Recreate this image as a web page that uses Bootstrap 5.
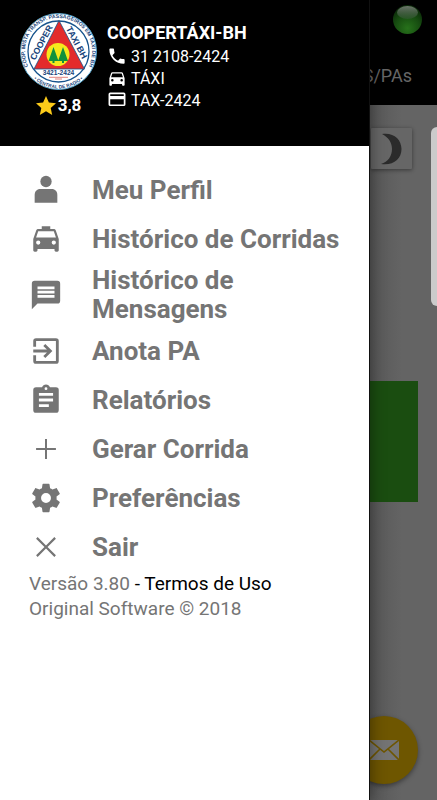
<!DOCTYPE html>
<html lang="pt-BR">
<head>
<meta charset="utf-8">
<meta name="viewport" content="width=device-width, initial-scale=1">
<title>Coopertáxi-BH</title>
<link href="https://cdn.jsdelivr.net/npm/bootstrap@5.3.0/dist/css/bootstrap.min.css" rel="stylesheet">
<style>
body { font-family: Roboto, sans-serif; color: #757575; background: #646464; }
svg { display: block; flex: none; }
.app-head { background: #000; height: 105px; padding: 4px 14px 0 0; }
.app-tab { font-size: 18px; line-height: 24px; color: #666; padding: 0 11px 17px 0; }
.map-area { background: linear-gradient(90deg, #646464 84%, #565656 84%, #646464 92%); }
.night-btn { width: 41px; height: 41px; margin: 23px 25px 0 0; border: 0; border-radius: 1px; background: #666; box-shadow: 0 1px 4px rgba(0,0,0,.45); }
.side-tab { top: 127px; width: 6px; height: 179px; background: #cbcbcb; border-radius: 6px 0 0 6px; }
.ride-box { width: 100px; height: 121px; margin: 212px 19px 0 0; background: #1a4d10; }
.mail-btn { width: 68px; height: 68px; margin: 0 19px 16px 0; border: 0; border-radius: 50%; background: #6e5600; box-shadow: 0 2px 5px rgba(0,0,0,.4); }
.drawer { width: calc(100% - 68px); background: #fff; box-shadow: 1px 0 0 #111, 2px 0 14px rgba(0,0,0,.4); }
.drawer-head { background: #000; color: #fff; height: 146px; padding: 13px 20px 0; gap: 10px; }
.rating { font-size: 17px; line-height: 24px; gap: 2px; margin-top: 3px; }
.co-name { font-size: 18px; line-height: 22px; margin: 9px 0 2px; }
.co-row { font-size: 16px; line-height: 22px; gap: 4px; }
.menu { padding: 20px 24px 0 29px; gap: 1px; }
.menu-row { min-height: 48px; padding: 2px 0; gap: 29px; font-size: 26px; line-height: 29px; font-weight: 700; color: #757575; }
.foot { padding: 0 29px; font-size: 19px; line-height: 25px; }
</style>
<script src="https://cdn.jsdelivr.net/npm/bootstrap@5.3.0/dist/js/bootstrap.bundle.min.js"></script>
</head>
<body>
<div class="position-relative min-vh-100 d-flex flex-column overflow-hidden">
  <header class="app-head d-flex flex-column justify-content-between align-items-end">
    <svg width="31" height="31" viewBox="0 0 31 31" aria-hidden="true">
      <defs>
        <radialGradient id="led" cx=".5" cy=".8" r=".75"><stop offset="0" stop-color="#27721b"/><stop offset=".6" stop-color="#164b10"/><stop offset="1" stop-color="#0a2708"/></radialGradient>
        <linearGradient id="shine" x1="0" y1="0" x2="0" y2="1"><stop offset="0" stop-color="#6d776b"/><stop offset="1" stop-color="#39583a" stop-opacity=".5"/></linearGradient>
      </defs>
      <circle cx="15.500" cy="15.500" r="14.500" fill="url(#led)"/>
      <ellipse cx="15.500" cy="8.500" rx="10.500" ry="6.500" fill="url(#shine)"/>
    </svg>
    <div class="app-tab">S/PAs</div>
  </header>
  <main class="map-area flex-grow-1 d-flex flex-column align-items-end">
    <button class="night-btn p-0 d-flex align-items-center justify-content-center" type="button" aria-label="Modo noturno">
      <svg width="22" height="34" viewBox="0 0 22 34"><path d="M1 2C12 0 20.500 7 20.500 17S12 34 0 32C7 30 11 24 11 17S7 5 1 2z" fill="#2b2b2b"/></svg>
    </button>
    <div class="ride-box"></div>
    <button class="mail-btn mt-auto p-0 d-flex align-items-center justify-content-center" type="button" aria-label="Mensagens">
      <svg width="30" height="20" viewBox="0 0 30 20"><path d="M0 0h30v20H0z" fill="#747474"/><path d="M0 0l15 12L30 0M0 20l11-11M30 20L19 9" fill="none" stroke="#6e5600" stroke-width="1.600"/></svg>
    </button>
  </main>
  <div class="side-tab position-absolute end-0"></div>

  <aside class="drawer position-absolute top-0 start-0 h-100">
    <div class="drawer-head d-flex">
      <div class="d-flex flex-column align-items-center">
        <svg width="77" height="77" viewBox="0 0 77 77" role="img" aria-label="Coopertáxi BH">
          <defs>
            <path id="arcTop" d="M11.500 58.500A33.600 33.600 0 1 1 65.500 58.500"/>
            <path id="arcLow" d="M8 59A36.600 36.600 0 0 0 69 59"/>
          </defs>
          <circle cx="38.500" cy="38.500" r="38" fill="#fff" stroke="#5aa7cf" stroke-width="1"/>
          <circle cx="38.500" cy="38.500" r="30.500" fill="#fff" stroke="#16538c" stroke-width="1.300"/>
          <path d="M39 7.500L64.500 56H14z" fill="#e32b2b" stroke="#16538c" stroke-width=".8"/>
          <circle cx="38" cy="41.500" r="11.500" fill="#f6e81c"/>
          <path d="M33.500 34l5 14h-4v2h-2v-2h-4zM43 34l5 14h-4v2h-2v-2h-4z" fill="#12913c"/>
          <g font-family="'Liberation Sans', sans-serif" font-weight="700" fill="#16437a">
            <text font-size="5.200" text-anchor="middle"><textPath href="#arcTop" startOffset="50%">COOP. MISTA TRANSP. PASSAGEIROS EM TAXI DE BH</textPath></text>
            <text font-size="4.800" text-anchor="middle"><textPath href="#arcLow" startOffset="50%">• CENTRAL DE RADIO •</textPath></text>
            <text font-size="8.800" text-anchor="middle" transform="translate(24 31) rotate(-62)">COOPER</text>
            <text font-size="9" text-anchor="middle" transform="translate(54 31) rotate(62)">TAXI BH</text>
            <text font-size="6.600" text-anchor="middle" x="38.500" y="61.800">3421-2424</text>
          </g>
          <path d="M29 64.300h19M35 66h7" stroke="#e0766e" stroke-width=".9"/>
        </svg>
        <div class="rating d-flex align-items-center fw-bold">
          <svg width="20" height="19" viewBox="0 0 20 19" aria-hidden="true"><path d="M10 0l2.900 6.500 7.100.7-5.300 4.700 1.500 7L10 15.300 3.800 18.900l1.500-7L0 7.200l7.100-.7z" fill="#fccb1a"/></svg>
          <span>3,8</span>
        </div>
      </div>
      <div>
        <h1 class="co-name fw-bold">COOPERTÁXI-BH</h1>
        <div class="co-row d-flex align-items-center"><svg width="20" height="22" viewBox="0 0 22 26" fill="#fff" aria-hidden="true"><path d="M5.620 10.790c1.440 2.830 3.760 5.140 6.590 6.590l2.200-2.200c.27-.27.67-.36 1.020-.24 1.120.37 2.330.57 3.570.57.55 0 1 .45 1 1V20c0 .55-.45 1-1 1-9.390 0-17-7.610-17-17 0-.55.45-1 1-1h3.500c.55 0 1 .45 1 1 0 1.250.2 2.450.57 3.570.11.35.03.74-.25 1.020z"/></svg><span>31 2108-2424</span></div>
        <div class="co-row d-flex align-items-center"><svg width="20" height="22" viewBox="1 0 22 26" fill="#fff" aria-hidden="true"><path d="M18.920 6.010C18.720 5.420 18.160 5 17.500 5h-11c-.66 0-1.210.42-1.420 1.010L3 12v8c0 .55.45 1 1 1h1c.55 0 1-.45 1-1v-1h12v1c0 .55.45 1 1 1h1c.55 0 1-.45 1-1v-8zM6.500 16a1.500 1.500 0 1 1 0-3 1.500 1.500 0 0 1 0 3zm11 0a1.500 1.500 0 1 1 0-3 1.500 1.500 0 0 1 0 3zM5 11l1.500-4.500h11L19 11z"/></svg><span>TÁXI</span></div>
        <div class="co-row d-flex align-items-center"><svg width="20" height="22" viewBox="1 0 22 26" fill="#fff" aria-hidden="true"><path d="M20 3H4a2 2 0 0 0-2 2v12a2 2 0 0 0 2 2h16a2 2 0 0 0 2-2V5a2 2 0 0 0-2-2zm0 14H4v-6h16zm0-10H4V5h16z"/></svg><span>TAX-2424</span></div>
      </div>
    </div>

    <nav class="menu d-flex flex-column" aria-label="Menu principal">
      <a href="#" class="menu-row d-flex align-items-center text-decoration-none"><svg width="34" height="34" viewBox="0 0 24 24" fill="#757575" aria-hidden="true"><circle cx="12" cy="6" r="4"/><path d="M4 21v-5.500C4 13 5.500 11.300 8 11.300h8c2.500 0 4 1.700 4 4.200V21z"/></svg><span>Meu Perfil</span></a>
      <a href="#" class="menu-row d-flex align-items-center text-decoration-none"><svg width="34" height="34" viewBox="0 0 24 24" fill="#757575" aria-hidden="true"><path d="M18.920 6.010C18.720 5.420 18.160 5 17.500 5H15V3H9v2H6.500c-.66 0-1.210.42-1.420 1.010L3 12v8c0 .55.45 1 1 1h1c.55 0 1-.45 1-1v-1h12v1c0 .55.45 1 1 1h1c.55 0 1-.45 1-1v-8zM6.500 16a1.500 1.500 0 1 1 0-3 1.500 1.500 0 0 1 0 3zm11 0a1.500 1.500 0 1 1 0-3 1.500 1.500 0 0 1 0 3zM5 11l1.500-4.500h11L19 11z"/></svg><span>Histórico de Corridas</span></a>
      <a href="#" class="menu-row d-flex align-items-center text-decoration-none"><svg width="34" height="34" viewBox="0 0 24 24" fill="#757575" aria-hidden="true"><path d="M20 2H4a2 2 0 0 0-2 2v18l4-4h14a2 2 0 0 0 2-2V4a2 2 0 0 0-2-2zm-2 12H6v-2h12zm0-3H6V9h12zm0-3H6V6h12z"/></svg><span>Histórico de Mensagens</span></a>
      <a href="#" class="menu-row d-flex align-items-center text-decoration-none"><svg width="34" height="34" viewBox="0 0 24 24" fill="#757575" aria-hidden="true"><path d="M10.090 15.590L11.500 17l5-5-5-5-1.410 1.410L12.670 11H3v2h9.670zM19 3H5a2 2 0 0 0-2 2v4h2V5h14v14H5v-4H3v4a2 2 0 0 0 2 2h14a2 2 0 0 0 2-2V5a2 2 0 0 0-2-2z"/></svg><span>Anota PA</span></a>
      <a href="#" class="menu-row d-flex align-items-center text-decoration-none"><svg width="34" height="34" viewBox="0 0 24 24" fill="#757575" aria-hidden="true"><path d="M19 3h-4.180C14.400 1.840 13.300 1 12 1s-2.400.84-2.820 2H5a2 2 0 0 0-2 2v14a2 2 0 0 0 2 2h14a2 2 0 0 0 2-2V5a2 2 0 0 0-2-2zm-7 0a1 1 0 1 1 0 2 1 1 0 0 1 0-2zm2 14H7v-2h7zm3-4H7v-2h10zm0-4H7V7h10z"/></svg><span>Relatórios</span></a>
      <a href="#" class="menu-row d-flex align-items-center text-decoration-none"><svg width="34" height="34" viewBox="0 0 24 24" fill="#757575" aria-hidden="true"><path d="M19 12.700h-6.300V19h-1.400v-6.300H5v-1.400h6.300V5h1.400v6.300H19z"/></svg><span>Gerar Corrida</span></a>
      <a href="#" class="menu-row d-flex align-items-center text-decoration-none"><svg width="34" height="34" viewBox="0 0 24 24" fill="#757575" aria-hidden="true"><path d="M19.430 12.980c.04-.32.07-.64.07-.98s-.03-.66-.07-.98l2.110-1.650c.19-.15.24-.42.12-.64l-2-3.460c-.12-.22-.39-.3-.61-.22l-2.490 1c-.52-.4-1.080-.73-1.690-.98l-.38-2.650C14.460 2.180 14.250 2 14 2h-4c-.25 0-.46.18-.49.42l-.38 2.650c-.61.25-1.170.59-1.690.98l-2.490-1c-.23-.09-.49 0-.61.22l-2 3.460c-.13.22-.07.49.12.64l2.110 1.650c-.04.32-.07.65-.07.98s.03.66.07.98l-2.110 1.650c-.19.15-.24.42-.12.64l2 3.460c.12.22.39.3.61.22l2.490-1c.52.4 1.080.73 1.690.98l.38 2.650c.03.24.24.42.49.42h4c.25 0 .46-.18.49-.42l.38-2.650c.61-.25 1.170-.59 1.690-.98l2.490 1c.23.09.49 0 .61-.22l2-3.460c.12-.22.07-.49-.12-.64zM12 15.500a3.500 3.500 0 1 1 0-7 3.500 3.500 0 0 1 0 7z"/></svg><span>Preferências</span></a>
      <a href="#" class="menu-row d-flex align-items-center text-decoration-none"><svg width="34" height="34" viewBox="0 0 24 24" fill="#757575" aria-hidden="true"><path d="M19 6.100L17.900 5 12 10.900 6.100 5 5 6.100l5.900 5.900L5 17.900 6.100 19l5.900-5.900 5.900 5.900 1.100-1.100-5.900-5.900z"/></svg><span>Sair</span></a>
    </nav>
    <div class="foot">
      <div>Versão 3.80 <a href="#" class="text-black text-decoration-none">- Termos de Uso</a></div>
      <div>Original Software © 2018</div>
    </div>
  </aside>
</div>
</body>
</html>
